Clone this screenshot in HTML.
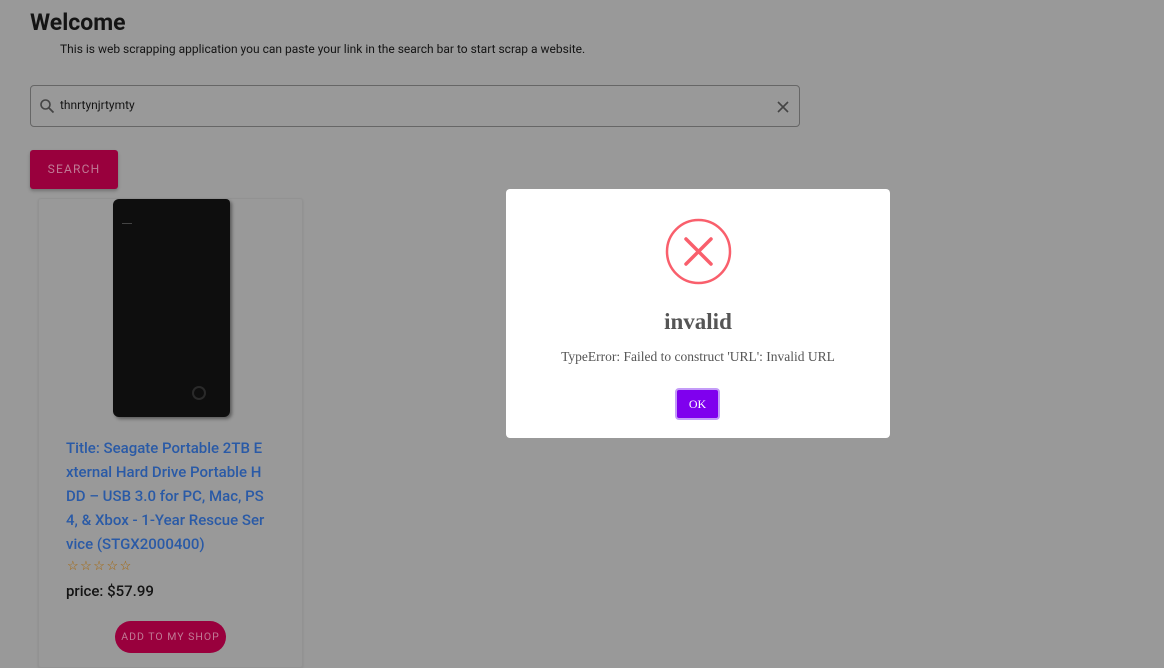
<!DOCTYPE html>
<html><head><style>
*{margin:0;padding:0;box-sizing:border-box}
body{width:1164px;height:658px;background:#999;font-family:Roboto,"Liberation Sans",sans-serif;position:relative;overflow:hidden}
.a{position:absolute}
</style></head><body>
<div class="a" style="left:30px;top:9px;font-size:23px;font-weight:bold;color:#141414">Welcome</div>
<div class="a" style="left:60px;top:42px;font-size:12px;color:#141414">This is web scrapping application you can paste your link in the search bar to start scrap a website.</div>
<div class="a" style="left:30px;top:85px;width:770px;height:42px;border:1px solid #666;border-radius:4px"></div>
<svg class="a" style="left:39px;top:98px" width="16" height="16" viewBox="0 0 16 16"><circle cx="6.5" cy="6.5" r="4.5" fill="none" stroke="#444" stroke-width="1.6"/><path d="M10 10l4.5 4.5" stroke="#444" stroke-width="1.8"/></svg>
<div class="a" style="left:60px;top:98px;font-size:12px;color:#141414">thnrtynjrtymty</div>
<svg class="a" style="left:777px;top:101px" width="12" height="12" viewBox="0 0 12 12"><path d="M1 1l10 10M11 1L1 11" stroke="#444" stroke-width="1.6"/></svg>
<div class="a" style="left:30px;top:150px;width:88px;height:39px;background:#99003d;border-radius:3px;box-shadow:0 2px 3px rgba(0,0,0,.25);color:#c07a95;font-size:12px;letter-spacing:1.2px;text-align:center;line-height:39px">SEARCH</div>
<div class="a" style="left:38px;top:198px;width:265px;height:470px;border:1px solid #929292;border-radius:3px;box-shadow:0 1px 2px rgba(0,0,0,.1)"></div>
<div class="a" style="left:113px;top:199px;width:117px;height:218px;background:#0e0e0e;border-radius:6px 4px 6px 6px;box-shadow:2px 2px 3px rgba(0,0,0,.4)"></div>
<div class="a" style="left:122px;top:223px;width:10px;height:1px;background:#444"></div>
<div class="a" style="left:192px;top:386px;width:14px;height:14px;border:2px solid #2a2a2a;border-radius:50%"></div>
<div class="a" style="left:66px;top:436px;width:210px;font-size:15px;line-height:24px;color:#2a5aa6;font-weight:500">Title: Seagate Portable 2TB E xternal Hard Drive Portable H DD – USB 3.0 for PC, Mac, PS 4, &amp; Xbox - 1-Year Rescue Ser vice (STGX2000400)</div>
<div class="a" style="left:67px;top:559px;font-size:13px;color:#a86400;letter-spacing:1.5px">☆☆☆☆☆</div>
<div class="a" style="left:66px;top:582px;font-size:15px;color:#141414;font-weight:500">price: $57.99</div>
<div class="a" style="left:115px;top:621px;width:111px;height:32px;background:#99003d;border-radius:16px;color:#c07a95;font-size:10.5px;letter-spacing:1px;text-align:center;line-height:32px">ADD TO MY SHOP</div>
<div class="a" style="left:506px;top:189px;width:384px;height:249px;background:#fff;border-radius:4px;font-family:'Liberation Serif',serif;text-align:center">
<svg class="a" style="left:159px;top:29px" width="67" height="67" viewBox="0 0 67 67"><circle cx="33.5" cy="33.5" r="31.5" fill="none" stroke="#f95f6c" stroke-width="2.5"/><path d="M21 21l25 25M46 21L21 46" stroke="#f95f6c" stroke-width="3.5" stroke-linecap="round"/></svg>
<div class="a" style="left:0;width:384px;top:120px;font-size:23px;font-weight:bold;color:#555">invalid</div>
<div class="a" style="left:0;width:384px;top:160px;font-size:13.5px;color:#555">TypeError: Failed to construct 'URL': Invalid URL</div>
<div class="a" style="left:169px;top:199px;width:45px;height:32px;background:#7f00ee;border:2px solid #c49cf8;border-radius:4px;color:#fff;font-size:12px;line-height:28px">OK</div>
</div>
</body></html>
